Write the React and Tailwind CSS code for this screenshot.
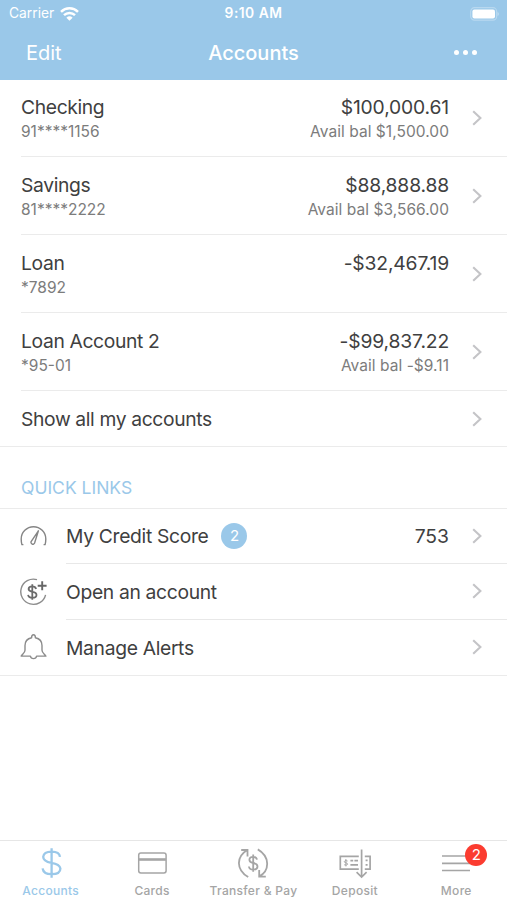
const accounts = [
  { name: 'Checking', number: '91****1156', balance: '$100,000.61', available: 'Avail bal $1,500.00', height: 'h-[77px]', pad: 'pt-[15px]' },
  { name: 'Savings', number: '81****2222', balance: '$88,888.88', available: 'Avail bal $3,566.00', height: 'h-[78px]', pad: 'pt-4' },
  { name: 'Loan', number: '*7892', balance: '-$32,467.19', height: 'h-[78px]', pad: 'pt-4' },
  { name: 'Loan Account 2', number: '*95-01', balance: '-$99,837.22', available: 'Avail bal -$9.11', height: 'h-[78px]', pad: 'pt-4' },
]

const links = [
  { label: 'My Credit Score', icon: GaugeIcon, badge: 2, value: '753' },
  { label: 'Open an account', icon: OpenAccountIcon },
  { label: 'Manage Alerts', icon: BellIcon },
]

const tabs = [
  { label: 'Accounts', icon: DollarIcon, active: true },
  { label: 'Cards', icon: CardIcon },
  { label: 'Transfer & Pay', icon: TransferIcon },
  { label: 'Deposit', icon: DepositIcon },
  { label: 'More', icon: MenuIcon, badge: 2 },
]

export default function App() {
  return (
    <div className="flex h-[900px] w-[507px] flex-col overflow-hidden bg-white font-['Inter','Liberation_Sans',sans-serif] text-[#404040]">
      <Header />

      <main className="flex-1">
        {/* Accounts */}
        <ul>
          {accounts.map(account => (
            <AccountRow key={account.name} {...account} />
          ))}
        </ul>
        <button className="flex h-14 w-full items-center justify-between border-b border-[#ebebeb] pt-px pr-[25px] pl-[21px] text-[19.3px] tracking-[-0.019em]">
          Show all my accounts
          <Chevron />
        </button>

        {/* Quick links */}
        <h2 className="flex h-[61.5px] items-end border-b border-[#ebebeb] pb-2 pl-[21px] text-[17.5px] leading-6 text-[#9ac8e9]">
          QUICK LINKS
        </h2>
        <ul className="border-b border-[#ebebeb]">
          {links.map(link => (
            <LinkRow key={link.label} {...link} />
          ))}
        </ul>
      </main>

      <TabBar />
    </div>
  )
}

function Header() {
  return (
    <header className="h-20 bg-[#9ac8e9] text-white">
      <div className="grid h-[27px] grid-cols-3 items-center px-2 text-[13.8px]">
        <div className="flex items-center gap-[6px] pl-px">
          <span>Carrier</span>
          <svg className="h-[14px] w-[19px]" viewBox="0 0 19 14" fill="none" stroke="currentColor" strokeWidth="2.5">
            <path d="M1 4.8a12.2 12.2 0 0 1 17 0" />
            <path d="M4 8.2a8 8 0 0 1 11 0" />
            <path d="M6.4 10.7a4.6 4.6 0 0 1 6.2 0L9.5 13.8z" fill="currentColor" stroke="none" />
          </svg>
        </div>
        <span className="text-center font-semibold tracking-[0.035em]">9:10 AM</span>
        <svg className="h-[14px] w-[29px] justify-self-end" viewBox="0 0 29 14">
          <rect x="0.7" y="0.7" width="26" height="12.4" rx="3.8" fill="none" stroke="#fff" strokeOpacity="0.3" strokeWidth="1.2" />
          <rect x="2.4" y="2.4" width="22.6" height="9" rx="2" fill="#fff" />
          <path d="M27.6 5v4q1.2-.6 1.2-2t-1.2-2" fill="#fff" fillOpacity="0.4" />
        </svg>
      </div>
      <div className="grid h-[51px] grid-cols-3 items-center px-[26px] text-[20px]">
        <button className="text-left">Edit</button>
        <h1 className="text-center font-medium">Accounts</h1>
        <button className="mr-[4px] flex gap-1 justify-self-end">
          <span className="size-[5px] rounded-full bg-white" />
          <span className="size-[5px] rounded-full bg-white" />
          <span className="size-[5px] rounded-full bg-white" />
        </button>
      </div>
    </header>
  )
}

function AccountRow({ name, number, balance, available, height, pad }) {
  return (
    <li className={`flex pl-[21px] ${height}`}>
      <div className="flex flex-1 items-center border-b border-[#ebebeb] pr-[25px]">
        <div className={`flex-1 self-start ${pad}`}>
          <p className="text-[19.3px] leading-6 tracking-[-0.019em]">{name}</p>
          <p className="text-[15.5px] leading-[26px] text-[#7c7c7c]">{number}</p>
        </div>
        <div className={`self-start text-right ${pad}`}>
          <p className="text-[19.3px] leading-6 tracking-[-0.008em]">{balance}</p>
          <p className="text-[15.5px] leading-[26px] tracking-[0.003em] text-[#7c7c7c]">{available}</p>
        </div>
        <Chevron className="ml-[23px]" />
      </div>
    </li>
  )
}

function LinkRow({ label, icon: Icon, badge, value }) {
  return (
    <li className="group flex h-[55.5px] items-center pl-5">
      <Icon />
      <div className="ml-[19px] flex h-full flex-1 items-center border-b border-[#e8e8e8] pr-[25px] group-last:border-b-0">
        <span className="pt-[2px] text-[19.3px] tracking-[-0.017em]">{label}</span>
        {badge && (
          <span className="ml-[13px] flex size-[26px] items-center justify-center rounded-full bg-[#9ac8e9] text-[15px] text-white">
            {badge}
          </span>
        )}
        <span className="ml-auto pt-px text-[19.3px]">{value}</span>
        <Chevron className="ml-[23px]" />
      </div>
    </li>
  )
}

function TabBar() {
  return (
    <nav className="grid h-[60px] grid-cols-5 border-t border-[#e6e6e6]">
      {tabs.map(({ label, icon: Icon, active, badge }) => (
        <button
          key={label}
          className={`flex flex-col items-center pt-[6px] ${active ? 'text-[#9ac8e9]' : 'text-[#a5a5a5]'}`}
        >
          <span className="relative">
            <Icon />
            {badge && (
              <span className="absolute -top-[3px] left-[25px] flex size-[22px] items-center justify-center rounded-full bg-[#fb3c30] text-[15px] text-white">
                {badge}
              </span>
            )}
          </span>
          <span className="mt-[4px] text-[12px] leading-4 font-medium tracking-[0.025em] whitespace-nowrap">{label}</span>
        </button>
      ))}
    </nav>
  )
}

function Chevron({ className = '' }) {
  return (
    <svg className={`h-4 w-[10px] ${className}`} viewBox="0 0 10 16" fill="none" stroke="#c4c4c7" strokeWidth="2.1">
      <path d="M1.2 1.2 8.4 8l-7.2 6.8" />
    </svg>
  )
}

function GaugeIcon() {
  return (
    <svg className="h-7 w-[27px]" viewBox="0 0 27 28" fill="none" stroke="#858585" strokeWidth="1.4" strokeLinejoin="round">
      <path d="M3.4 22.6H1.9Q1.2 20.2 1.2 17a12.3 12.3 0 0 1 24.6 0q0 3.2-.7 5.6h-1.5" />
      <path d="M18.4 8.8 11.1 19.6a1.8 1.8 0 1 0 3.5 1.4z" />
    </svg>
  )
}

function OpenAccountIcon() {
  return (
    <svg className="h-7 w-[27px]" viewBox="0 0 27 28" fill="none" stroke="#8c8c8c" strokeWidth="1.4">
      <path d="M17 1.7A12.6 12.6 0 1 0 25.6 16.8" />
      <path d="M22.2 3.2v9M17.7 7.7h8.9" stroke="#666" strokeWidth="1.9" />
      <path d="M16.1 10.9q-.7-2.5-3.9-2.5-3.6 0-3.6 2.7 0 2.1 3.7 2.7 4.2.6 4.2 3.1 0 2.8-4.1 2.8-3.9 0-4.3-2.9M12.3 6.3v15.5" stroke="#6c6c6c" strokeWidth="1.8" />
    </svg>
  )
}

function BellIcon() {
  return (
    <svg className="h-7 w-[27px]" viewBox="0 0 27 28" fill="none" stroke="#8c8c8c" strokeWidth="1.4" strokeLinejoin="round">
      <path d="M11.6 4.7q0-3 1.9-3t1.9 3c4.3.9 6.6 4 6.6 7.8v4.8c0 2.2 1.8 3.4 3.9 5.8h-9.3c-.6 3.3-5.6 3.3-6.2 0H1.1C3.2 20.7 5 19.5 5 17.3v-4.8c0-3.8 2.3-6.9 6.6-7.8z" />
    </svg>
  )
}

function DollarIcon() {
  return (
    <svg className="h-8 w-8" viewBox="0 0 32 32" fill="none" stroke="currentColor" strokeWidth="2.3">
      <path d="M25 9.8q-.7-5.2-8.4-5.2T8.2 9.8q0 4.7 8.2 6t9 5.7q0 5.7-8.8 5.7-8.2 0-9-5.9M16.6 1.2v29.6" />
    </svg>
  )
}

function CardIcon() {
  return (
    <svg className="h-8 w-8" viewBox="0 0 32 32" fill="none" stroke="currentColor" strokeWidth="1.5">
      <rect x="2.7" y="6" width="27.4" height="20" rx="2.2" />
      <path d="M2.9 12.5h27" strokeWidth="2.6" />
    </svg>
  )
}

function TransferIcon() {
  return (
    <svg className="h-8 w-8" viewBox="0 0 32 32" fill="none" stroke="currentColor" strokeWidth="1.8">
      <path d="M11.2 30C-1.4 22.5-.5 9.5 9.9 3.2M4.2 3h6.3v6.6M20.8 2.4C33 9.5 33 23.5 22.4 29.4M22.2 23v6.6h6.6" />
      <path d="M20 12.6q-.7-2.8-3.9-2.8-3.7 0-3.7 3 0 2.5 3.8 3.2 4.3.8 4.3 3.5 0 3.1-4.2 3.1-4 0-4.4-3.1M16.2 7.4v17.4" strokeWidth="1.8" />
    </svg>
  )
}

function DepositIcon() {
  return (
    <svg className="h-8 w-8" viewBox="0 0 32 32" fill="none" stroke="currentColor" strokeWidth="1.7">
      <path d="M19.8 9.3H1.3v12.9h18.5M25.8 9.3h5.3v12.9h-5.3M22.6 2.5v27.3M17.6 25.2l5 4.8 5-4.8" />
      <path d="M11.4 13.6h2.8M15.4 13.6h3.6M11.4 17.9H19M26.6 13.4h2M26.6 17.9h2" />
      <path d="M8.6 14q-3.3-1.1-3.3.6 0 1 1.6 1.2t1.7 1.4q0 1.5-3.4.6M6.9 12v7.4" strokeWidth="1" />
    </svg>
  )
}

function MenuIcon() {
  return (
    <svg className="h-8 w-8" viewBox="0 0 32 32" fill="none" stroke="currentColor" strokeWidth="1.7">
      <path d="M2 9h28M2 16.3h28M2 23.5h28" />
    </svg>
  )
}
